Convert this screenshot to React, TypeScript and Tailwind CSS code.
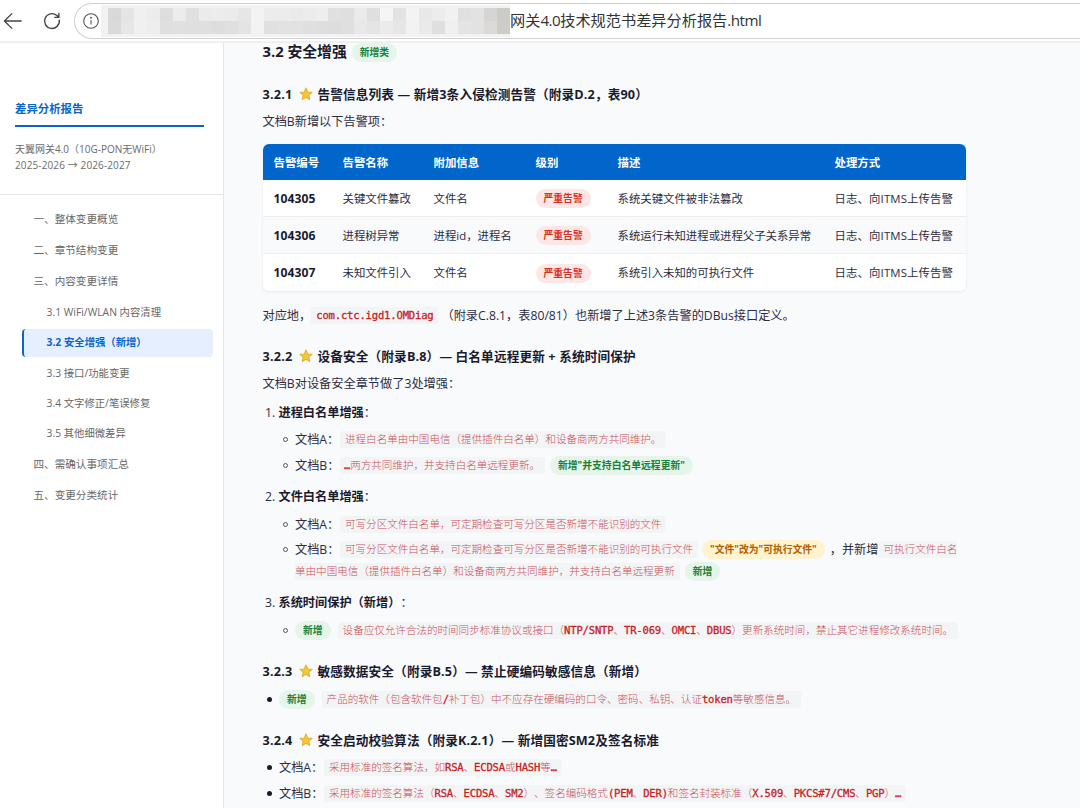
import React from 'react';
import { clsx } from 'clsx';

interface NavItem {
  label: string;
  sub?: boolean;
  active?: boolean;
}

interface AlarmRow {
  code: string;
  name: string;
  info: string;
  desc: string;
}

const navItems: NavItem[] = [
  { label: '一、整体变更概览' },
  { label: '二、章节结构变更' },
  { label: '三、内容变更详情' },
  { label: '3.1 WiFi/WLAN 内容清理', sub: true },
  { label: '3.2 安全增强（新增）', sub: true, active: true },
  { label: '3.3 接口/功能变更', sub: true },
  { label: '3.4 文字修正/笔误修复', sub: true },
  { label: '3.5 其他细微差异', sub: true },
  { label: '四、需确认事项汇总' },
  { label: '五、变更分类统计' },
];

const alarms: AlarmRow[] = [
  { code: '104305', name: '关键文件篡改', info: '文件名', desc: '系统关键文件被非法篡改' },
  { code: '104306', name: '进程树异常', info: '进程id，进程名', desc: '系统运行未知进程或进程父子关系异常' },
  { code: '104307', name: '未知文件引入', info: '文件名', desc: '系统引入未知的可执行文件' },
];

// Grey levels of the masked part of the address, one pair (top, bottom) per column
const maskColumns = [
  ['#d9d9d9', '#dadada'], ['#e4e4e4', '#e6e6e6'], ['#f0f0f0', '#f0f0f0'], ['#ececec', '#eeeeee'],
  ['#dedede', '#dfdfdf'], ['#ececec', '#e0e0e0'], ['#e0e0e0', '#dfdfdf'], ['#ebebeb', '#dfdfdf'],
  ['#ececec', '#dddddd'], ['#ebebeb', '#dfdfdf'], ['#e6e6e6', '#e4e4e4'], ['#f3f3f3', '#f3f3f3'],
  ['#ececec', '#e0e0e0'], ['#ececec', '#e2e2e2'], ['#eaeaea', '#e2e2e2'], ['#ececec', '#dfdfdf'],
  ['#eeeeee', '#dfdedd'], ['#e0e0e0', '#dddddd'], ['#dfdfdf', '#dfdfdf'], ['#eaeaea', '#e8e8e8'],
  ['#dfdfdf', '#e5e5e5'], ['#f5f5f5', '#ebebeb'], ['#e3e3e3', '#e6e6e6'], ['#f3f3f3', '#f2f2f2'],
  ['#e8e8e8', '#eaeaea'], ['#ececec', '#dfdfdf'], ['#f1f1f1', '#f0f0f0'], ['#e0e0e0', '#e4e4e4'],
  ['#e2e2e2', '#e2e2e2'], ['#d6d5d3', '#dbdad8'], ['#cccbc8', '#cdccc9'],
];

function BrowserBar() {
  return (
    <div className="flex h-[43px] shrink-0 items-start border-b-2 border-[#f0f0f0] bg-white">
      <svg className="mt-[11px] ml-[3px] h-5 w-5 shrink-0" viewBox="0 0 20 20" fill="none" stroke="#444" strokeWidth="1.3" strokeLinecap="round" strokeLinejoin="round">
        <path d="M18.2 10H1.4M8.9 2.6L1.4 10l7.5 7.4" />
      </svg>
      <svg className="mt-[11px] ml-[19px] h-5 w-5 shrink-0" viewBox="0 0 20 20" fill="none" stroke="#444" strokeWidth="1.4" strokeLinecap="round" strokeLinejoin="round">
        <path d="M17.3 9.2A7.4 7.4 0 1 1 14.6 4.3L16.8 6.2M16.9 2.4V6.4H12.8" />
      </svg>
      <div className="mt-[3px] ml-[12px] flex h-9 flex-1 items-center rounded-l-full border border-r-0 border-[#d0d0d0] pl-2">
        <svg className="h-4 w-4 shrink-0" viewBox="0 0 16 16" fill="none" stroke="#555" strokeWidth="1.1">
          <circle cx="8" cy="8" r="7.3" />
          <path d="M8 7v4.600" />
          <circle cx="8" cy="4.700" r="0.400" fill="#555" />
        </svg>
        <div className="ml-[2px] flex h-[32px] w-[409px] shrink-0 bg-[#f2f2f2] pt-[3px] pb-[3px] pl-[7px]">
          {maskColumns.map(([top, bottom], i) => (
            <div key={i} className="flex w-[13px] shrink flex-col">
              <div className="flex-1" style={{ backgroundColor: top }} />
              <div className="flex-1" style={{ backgroundColor: bottom }} />
            </div>
          ))}
        </div>
        <span className="text-[15.2px] leading-none whitespace-nowrap text-[#333]">
          网关<span className="tracking-[-0.5px]">4.0</span>技术规范书差异分析报告<span className="tracking-[-0.5px]">.html</span>
        </span>
      </div>
    </div>
  );
}

function Sidebar() {
  return (
    <aside className="w-[224px] shrink-0 rounded-tl border-r border-[#e3e5e8] bg-white">
      <div className="h-[152px] border-b border-[#e3e5e8] px-[15px] pt-[54px]">
        <div className="h-[30px] w-[189px] border-b-2 border-[#0a66c2] text-[11.4px] leading-[23px] font-bold text-[#0a66c8]">
          差异分析报告
        </div>
        <div className="mt-[14px] text-[10px] leading-4 whitespace-nowrap text-[#6b6b6b]">
          天翼网关4.0（10G-PON无WiFi）
          <br />
          <span className="tracking-[0.12px]">2025-2026 → 2026-2027</span>
        </div>
      </div>
      <nav className="flex flex-col pt-[9px] pr-[10px] pl-[21.5px]">
        {navItems.map((item) => (
          <a
            key={item.label}
            className={clsx(
              'flex items-center whitespace-nowrap',
              item.sub ? 'my-px h-[28.3px] rounded-[4px] pl-[25px] text-[10.35px]' : 'h-[31.2px] pl-[12px] text-[10.6px]',
              item.active ? 'border-l-2 border-[#0a66c8] bg-[#e5efff] pl-[23px]! font-bold text-[#0a66c8]' : 'text-[#666]',
            )}
          >
            {item.label}
          </a>
        ))}
      </nav>
    </aside>
  );
}

function Star() {
  return (
    <svg className="mx-[5px] h-[14px] w-[14px] shrink-0" viewBox="0 0 24 24">
      <path
        d="M12 1.8l3 6.6 7.3.8-5.400 4.900 1.500 7.200L12 17.700l-6.400 3.600 1.500-7.200L1.700 9.200 9 8.400z"
        fill="#f2c83a"
        stroke="#e3b234"
        strokeWidth="1.8"
        strokeLinejoin="round"
      />
    </svg>
  );
}

function Heading({ num, title, className }: { num: string; title: string; className?: string }) {
  return (
    <h4 className={clsx('flex h-[22px] items-center text-[12.65px] font-bold whitespace-nowrap text-[#1a1a2e]', className)}>
      <span className="w-[31px] tracking-[0.2px]">{num}</span>
      <Star />
      <span className="tracking-[0.13px]">{title}</span>
    </h4>
  );
}

const badgeColors = {
  green: 'bg-[#e6f5ea] text-[#188038]',
  red: 'bg-[#fde7e6] text-[#d93025]',
  yellow: 'bg-[#fff3d0] text-[#b06000]',
};

function Badge({ color = 'green', className, children }: { color?: keyof typeof badgeColors; className?: string; children: React.ReactNode }) {
  return (
    <span className={clsx('inline-flex h-[19px] shrink-0 items-center justify-center rounded-full px-2 pt-px text-[9.8px] font-bold', badgeColors[color], className)}>
      {children}
    </span>
  );
}

// Latin runs are set heavier and a little tighter than the Chinese text round them
function Code({ text, className }: { text: string; className?: string }) {
  return (
    <code className={clsx("inline-flex h-[17px] shrink-0 items-center rounded-[3px] bg-[#f3f4f5] px-[5px] font-['DejaVu_Sans_Mono','Noto_Sans_CJK_SC',monospace] text-[10.55px] font-light whitespace-pre text-[#c9505a]", className)}>
      {text.split(/([\x21-\x7e…]+)/).map((part, i) =>
        i % 2 ? (
          <span key={i} className="font-normal tracking-[-0.18px] text-[#c5221f] [-webkit-text-stroke:0.3px_#c5221f]">{part}</span>
        ) : (
          part
        ),
      )}
    </code>
  );
}

function Item({ marker, className, children }: { marker: 'disc' | 'circle'; className?: string; children: React.ReactNode }) {
  return (
    <li className={clsx('flex h-[22px] items-center whitespace-nowrap', marker === 'circle' ? 'pl-[20px]' : 'pl-[4px]', className)}>
      <span
        className={clsx(
          'mr-[7.5px] h-[5px] w-[5px] shrink-0 rounded-full',
          marker === 'circle' ? 'border border-[#555]' : 'bg-[#1a1a2e]',
        )}
      />
      {children}
    </li>
  );
}

function DocLabel({ children }: { children: React.ReactNode }) {
  return <span className="w-[45px] pt-px">{children}</span>;
}

function NumberItem({ num, title, className }: { num: string; title: string; className?: string }) {
  return (
    <div className={clsx('flex h-[22px] items-center pt-[1.5px] pl-[2.5px]', className)}>
      <span className="w-[13.5px]">{num}</span>
      <strong className="text-[#1a1a2e]">{title}</strong>：
    </div>
  );
}

function AlarmTable() {
  const cols = 'grid grid-cols-[69px_91px_102px_82px_217px_142px] items-center *:pl-[11px]';
  return (
    <div className="mt-3 h-[147px] w-[703.500px] overflow-hidden rounded-[6px] bg-white text-[11.4px] whitespace-nowrap shadow-[0_1px_3px_rgba(0,0,0,0.08)]">
      <div className={clsx(cols, 'h-9 bg-[#0066cc] pt-px font-bold text-white')}>
        <span>告警编号</span>
        <span>告警名称</span>
        <span>附加信息</span>
        <span>级别</span>
        <span>描述</span>
        <span>处理方式</span>
      </div>
      {alarms.map((row) => (
        <div key={row.code} className={clsx(cols, 'h-[37px] border-b border-[#eceef0] pt-px last:border-b-0 odd:bg-[#f8fafc]')}>
          <strong className="text-[12.1px] tracking-[0.1px] text-[#1a1a2e]">{row.code}</strong>
          <span>{row.name}</span>
          <span>{row.info}</span>
          <span className="flex">
            <Badge color="red">严重告警</Badge>
          </span>
          <span>{row.desc}</span>
          <span className="tracking-[0.13px]">日志、向ITMS上传告警</span>
        </div>
      ))}
    </div>
  );
}

export default function App() {
  return (
    <div className="flex h-[808px] w-[1080px] flex-col overflow-hidden bg-white font-['Open_Sans','Noto_Sans_CJK_SC',sans-serif] [text-spacing-trim:space-all]">
      <BrowserBar />
      <div className="flex min-h-0 flex-1 bg-[#f8fafc]">
        <Sidebar />
        <main className="flex-1 pl-[38.5px] text-[12.2px] leading-[22px] text-[#2c2c3e]">
          <h3 className="flex h-[15px] items-center text-[14.8px] font-bold text-[#1a1a2e]">
            3.2 安全增强
            <Badge className="mt-[3px] ml-[5px]">新增类</Badge>
          </h3>

          <Heading className="mt-[25px]" num="3.2.1" title="告警信息列表 — 新增3条入侵检测告警（附录D.2，表90）" />
          <p className="mt-[5px] pt-px leading-[21px]">文档B新增以下告警项：</p>
          <AlarmTable />
          <p className="mt-[13px] flex h-[22px] items-center whitespace-nowrap">
            <span className="pt-px">对应地，</span>
            <Code text="com.ctc.igd1.OMDiag" />
            <span className="ml-[3px] pt-px">（附录C.8.1，表80/81）也新增了上述3条告警的DBus接口定义。</span>
          </p>

          <Heading className="mt-[19px]" num="3.2.2" title="设备安全（附录B.8）— 白名单远程更新 + 系统时间保护" />
          <p className="mt-[5px] pt-px leading-[21px]">文档B对设备安全章节做了3处增强：</p>

          <NumberItem className="mt-[7px]" num="1." title="进程白名单增强" />
          <ul>
            <Item marker="circle" className="mt-[5px]">
              <DocLabel>文档A：</DocLabel>
              <Code text="进程白名单由中国电信（提供插件白名单）和设备商两方共同维护。" />
            </Item>
            <Item marker="circle" className="mt-[4px]">
              <DocLabel>文档B：</DocLabel>
              <Code className="pl-[4px]" text="…两方共同维护，并支持白名单远程更新。" />
              <Badge className="ml-[5px]">新增"并支持白名单远程更新"</Badge>
            </Item>
          </ul>

          <NumberItem className="mt-[9px]" num="2." title="文件白名单增强" />
          <ul>
            <Item marker="circle" className="mt-[6px]">
              <DocLabel>文档A：</DocLabel>
              <Code text="可写分区文件白名单，可定期检查可写分区是否新增不能识别的文件" />
            </Item>
            <Item marker="circle" className="mt-[3px]">
              <DocLabel>文档B：</DocLabel>
              <Code text="可写分区文件白名单，可定期检查可写分区是否新增不能识别的可执行文件" />
              <Badge color="yellow" className="ml-[4px]">"文件"改为"可执行文件"</Badge>
              <span className="ml-[5px] pt-px">，并新增</span>
              <Code className="rounded-r-none pr-0" text="可执行文件白名" />
            </Item>
            <li className="flex h-[22px] items-center pl-[32.5px]">
              <Code className="rounded-l-none pl-0" text="单由中国电信（提供插件白名单）和设备商两方共同维护，并支持白名单远程更新" />
              <Badge className="ml-[5px]">新增</Badge>
            </li>
          </ul>

          <NumberItem className="mt-[9px]" num="3." title="系统时间保护（新增）" />
          <ul>
            <Item marker="circle" className="mt-[6px]">
              <Badge>新增</Badge>
              <Code className="ml-[7px]" text="设备应仅允许合法的时间同步标准协议或接口（NTP/SNTP、TR-069、OMCI、DBUS）更新系统时间，禁止其它进程修改系统时间。" />
            </Item>
          </ul>

          <Heading className="mt-[19px]" num="3.2.3" title="敏感数据安全（附录B.5）— 禁止硬编码敏感信息（新增）" />
          <ul>
            <Item marker="disc" className="mt-[6px]">
              <Badge>新增</Badge>
              <Code className="ml-[7px]" text="产品的软件（包含软件包/补丁包）中不应存在硬编码的口令、密码、私钥、认证token等敏感信息。" />
            </Item>
          </ul>

          <Heading className="mt-[19px]" num="3.2.4" title="安全启动校验算法（附录K.2.1）— 新增国密SM2及签名标准" />
          <ul>
            <Item marker="disc" className="mt-[5px]">
              <DocLabel>文档A：</DocLabel>
              <Code text="采用标准的签名算法，如RSA、ECDSA或HASH等…" />
            </Item>
            <Item marker="disc" className="mt-[4px]">
              <DocLabel>文档B：</DocLabel>
              <Code text="采用标准的签名算法（RSA、ECDSA、SM2）、签名编码格式(PEM、DER)和签名封装标准（X.509、PKCS#7/CMS、PGP）…" />
            </Item>
          </ul>
        </main>
      </div>
    </div>
  );
}
